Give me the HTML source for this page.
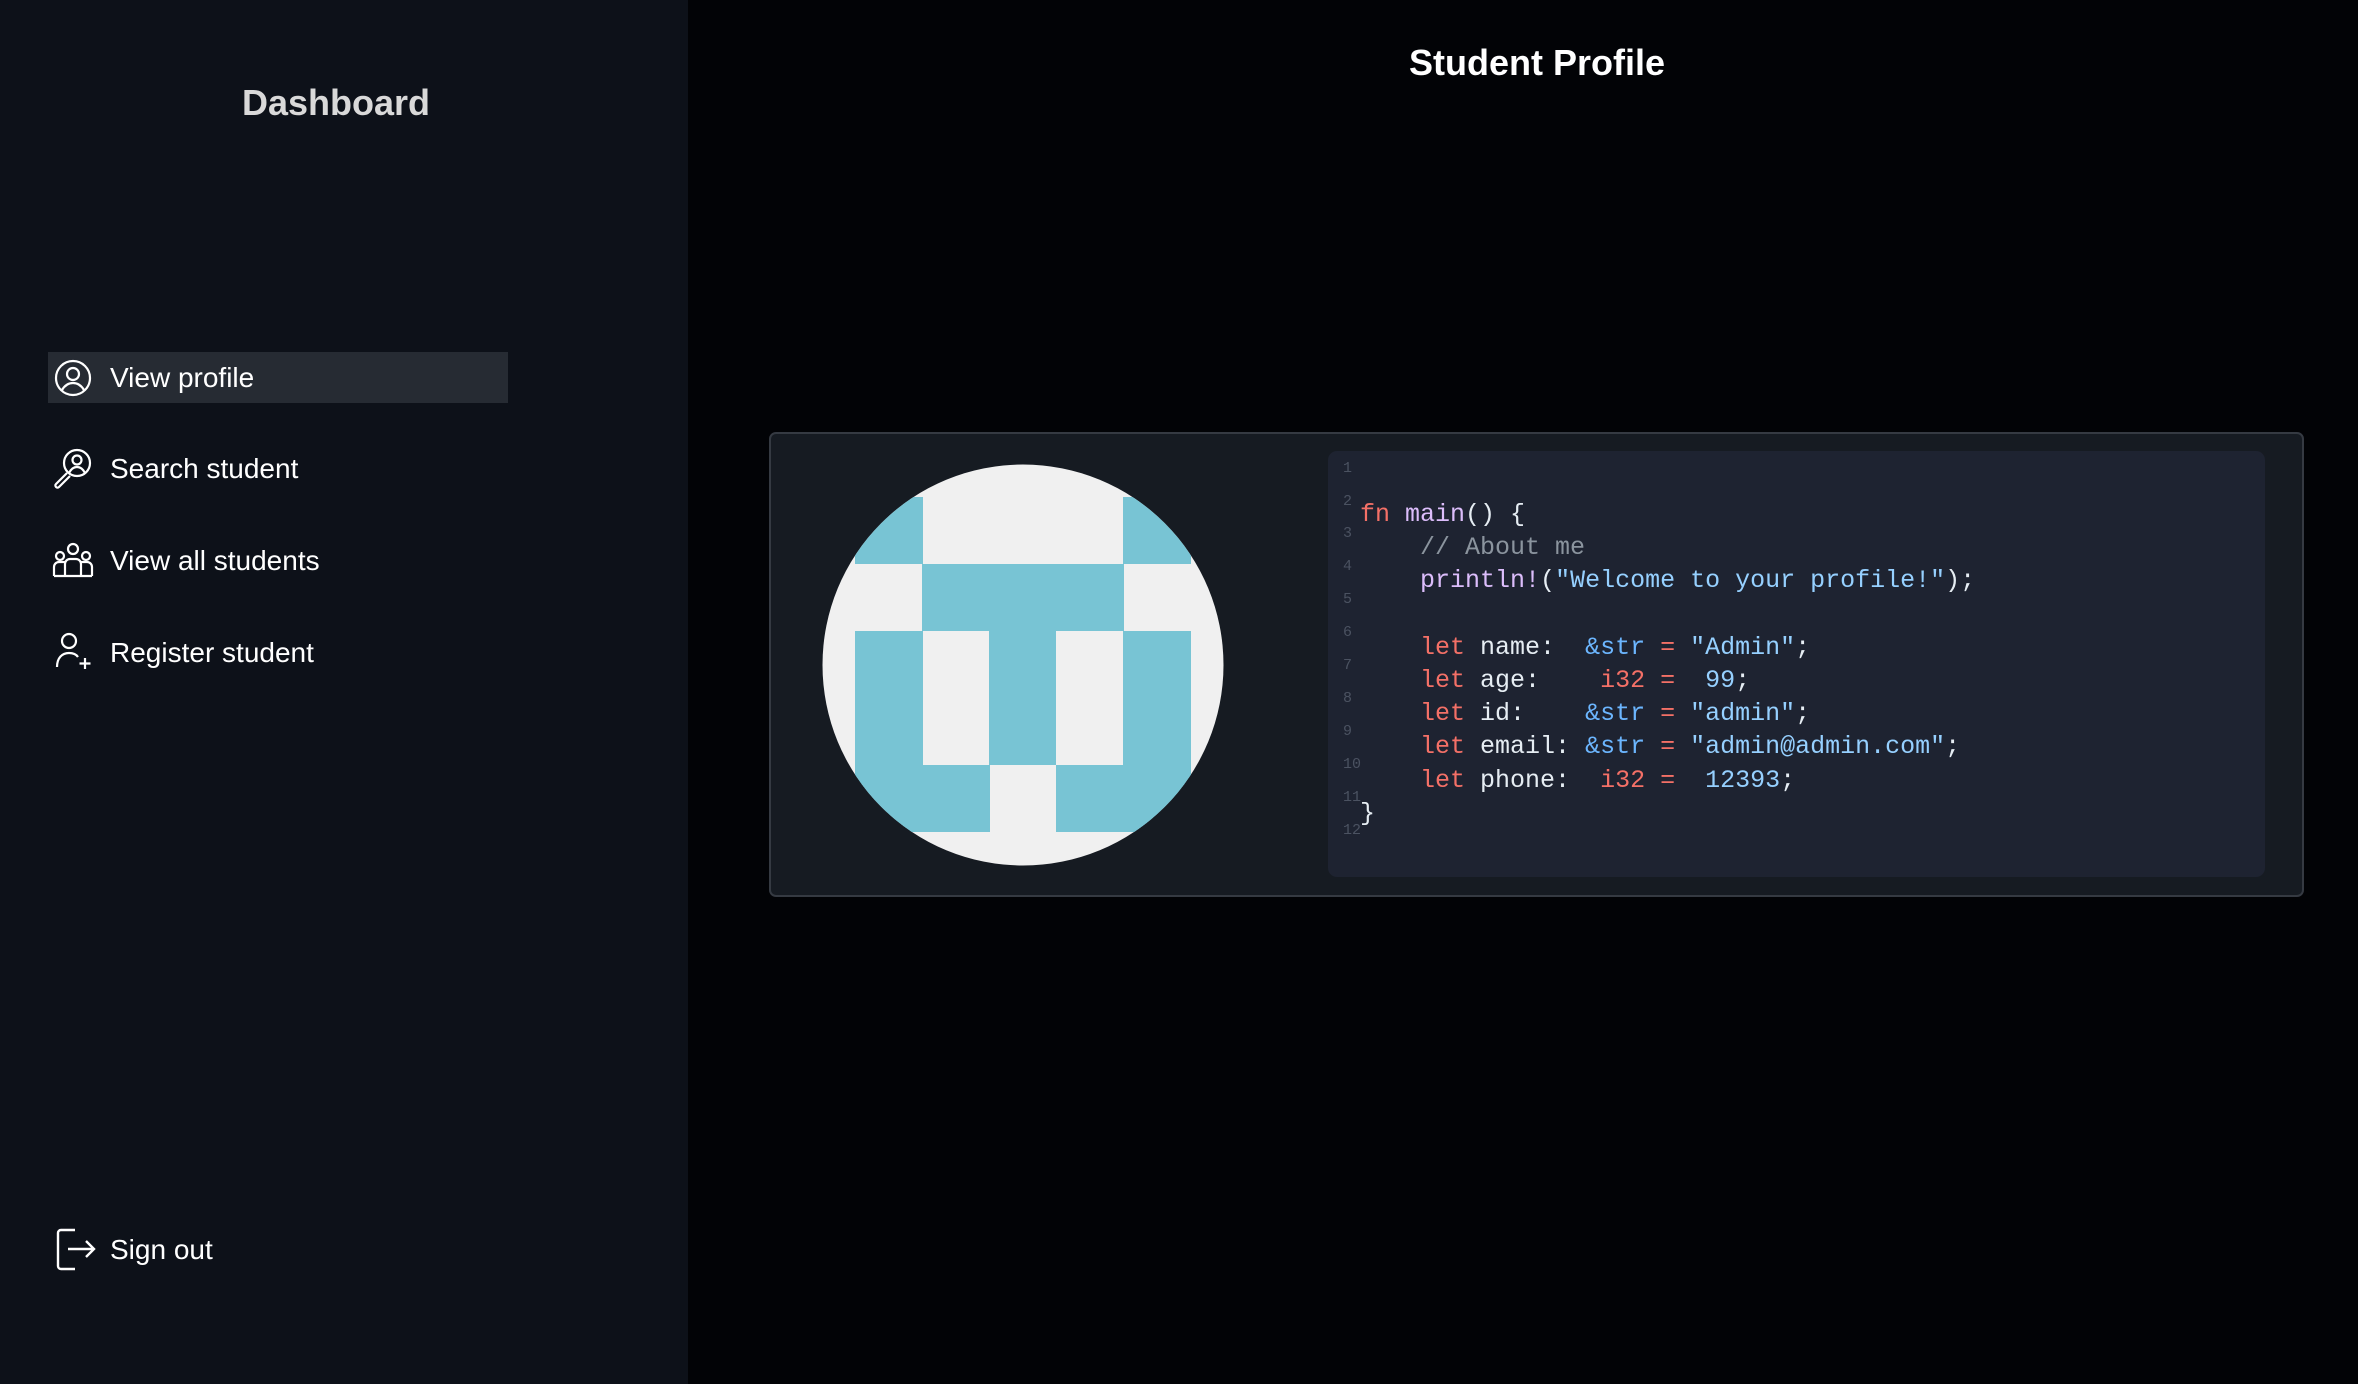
<!DOCTYPE html>
<html><head><meta charset="utf-8"><style>
*{margin:0;padding:0;box-sizing:border-box}
html,body{width:2358px;height:1384px;overflow:hidden;background:#020306;font-family:"Liberation Sans",sans-serif}
.side{position:absolute;left:0;top:0;width:688px;height:1384px;background:#0d1119}
.title{position:absolute;left:0;width:672px;top:82px;text-align:center;color:#d9d9d9;font-weight:bold;font-size:36px}
.item{position:absolute;left:48px;width:460px;height:51px;color:#fff;font-size:28px;line-height:51px;padding-left:62px}
.item svg{position:absolute;left:6px;top:7px}
.active{background:#262b33}
.h{position:absolute;left:688px;right:0;top:42px;text-align:center;color:#fff;font-weight:bold;font-size:36px;padding-left:28px}
.card{position:absolute;left:769px;top:432px;width:1535px;height:465px;background:#161b22;border:2px solid #353a42;border-radius:7px}
.code{position:absolute;left:1328px;top:451px;width:937px;height:426px;background:#1e2331;border-radius:9px}
pre{position:absolute;left:1360px;top:498px;font-family:"Liberation Mono",monospace;font-size:25px;line-height:33.2px;color:#e6edf3}
.ln{position:absolute;left:1343px;font-family:"Liberation Mono",monospace;font-size:15px;color:#4b5261}
.k{color:#f47067}.f{color:#dcbdfb}.c{color:#8b949e}.s{color:#96d0ff}.t{color:#6cb6ff}
</style></head><body>
<div class="side">
<div class="title">Dashboard</div>
<div class="item active" style="top:352px"><svg width="38" height="38" viewBox="0 0 38 38" fill="none" stroke="#fff" stroke-width="2.2"><circle cx="19" cy="19" r="17"/><circle cx="19" cy="15" r="6"/><path d="M8 31c3-5 7-7 11-7s8 2 11 7"/></svg>View profile</div>
<div class="item" style="top:443px"><svg width="42" height="42" viewBox="0 0 42 42" fill="none" stroke="#fff" stroke-width="2.2" style="left:4px;top:5px"><circle cx="25" cy="15" r="13"/><circle cx="25" cy="12" r="4.5"/><path d="M17 25c2-4 5-6 8-6s6 2 8 6"/><path d="M15 25l-11 11a2 2 0 0 0 3 3l11-11"/></svg>Search student</div>
<div class="item" style="top:535px"><svg width="42" height="38" viewBox="0 0 42 38" fill="none" stroke="#fff" stroke-width="2.2" style="left:4px"><circle cx="21" cy="7" r="5"/><circle cx="8" cy="14" r="4"/><circle cx="34" cy="14" r="4"/><path d="M2 34V25a5 5 0 0 1 5-5h6M40 34V25a5 5 0 0 0-5-5h-6M13 34V22a5 5 0 0 1 5-5h6a5 5 0 0 1 5 5v12M2 34h38"/></svg>View all students</div>
<div class="item" style="top:627px"><svg width="42" height="42" viewBox="0 0 42 42" fill="none" stroke="#fff" stroke-width="2.2" style="left:6px;top:4px"><circle cx="15" cy="10" r="7"/><path d="M3 36c0-9 5-14 12-14 4 0 7 1 9 4"/><path d="M31 27v11M25.5 32.5h11"/></svg>Register student</div>
<div class="item" style="top:1224px"><svg width="44" height="44" viewBox="0 0 44 44" fill="none" stroke="#fff" stroke-width="2.4" style="left:6px;top:4px"><path d="M21 2H7a3 3 0 0 0-3 3v33a3 3 0 0 0 3 3h14"/><path d="M14 21h26M32 13l8 8-8 8"/></svg>Sign out</div>
</div>
<div class="h">Student Profile</div>
<div class="card"></div>
<svg style="position:absolute;left:822px;top:464px" width="402" height="402" viewBox="0 0 402 402">
<defs><clipPath id="cp"><circle cx="201" cy="201" r="200.5"/></clipPath></defs>
<g clip-path="url(#cp)"><rect width="402" height="402" fill="#f0f0f0"/>
<g fill="#78c4d4" transform="translate(33,33)">
<rect x="0" y="0" width="68" height="67"/><rect x="268" y="0" width="68" height="67"/>
<rect x="67" y="67" width="202" height="67"/>
<rect x="0" y="134" width="68" height="201"/><rect x="268" y="134" width="68" height="201"/>
<rect x="134" y="134" width="67" height="134"/>
<rect x="0" y="268" width="135" height="67"/><rect x="201" y="268" width="135" height="67"/>
</g></g></svg>
<div class="code"></div>
<div class="ln" style="top:460px">1</div><div class="ln" style="top:493px">2</div><div class="ln" style="top:525px">3</div><div class="ln" style="top:558px">4</div><div class="ln" style="top:591px">5</div><div class="ln" style="top:624px">6</div><div class="ln" style="top:657px">7</div><div class="ln" style="top:690px">8</div><div class="ln" style="top:723px">9</div><div class="ln" style="top:756px">10</div><div class="ln" style="top:789px">11</div><div class="ln" style="top:822px">12</div>
<pre><span class="k">fn</span> <span class="f">main</span>() {
    <span class="c">// About me</span>
    <span class="f">println!</span>(<span class="s">"Welcome to your profile!"</span>);

    <span class="k">let</span> name:  <span class="t">&amp;str</span> <span class="k">=</span> <span class="s">"Admin"</span>;
    <span class="k">let</span> age:    <span class="k">i32</span> <span class="k">=</span>  <span class="s">99</span>;
    <span class="k">let</span> id:    <span class="t">&amp;str</span> <span class="k">=</span> <span class="s">"admin"</span>;
    <span class="k">let</span> email: <span class="t">&amp;str</span> <span class="k">=</span> <span class="s">"admin@admin.com"</span>;
    <span class="k">let</span> phone:  <span class="k">i32</span> <span class="k">=</span>  <span class="s">12393</span>;
}</pre>
</body></html>
